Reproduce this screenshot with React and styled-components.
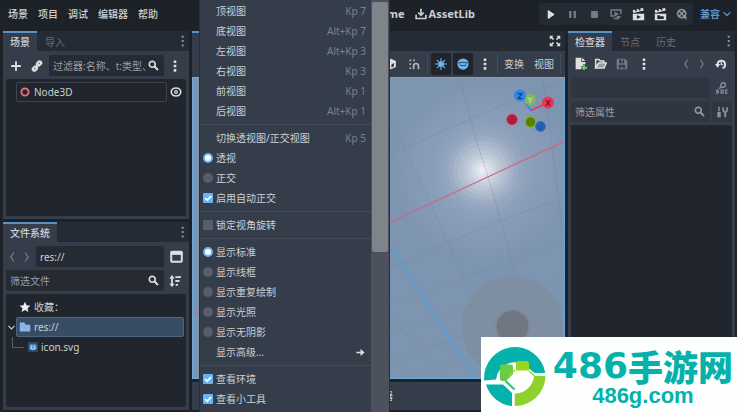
import React from "react";
import styled, { createGlobalStyle } from "styled-components";

const base = "#1d2229";
const panel = "#363d4a";
const tabBar = "#252b34";
const well = "#21262e";
const field = "#252a33";
const dimField = "#2f3541";
const textColor = "#cdcfd2";
const dimText = "#7b808a";
const accent = "#5a93c4";
const teal = "#05b1ab";

const GlobalStyle = createGlobalStyle`
    * {
        box-sizing: border-box;
    }
    body {
        margin: 0;
        background: ${base};
        color: ${textColor};
        font: 10px/14px "Noto Sans", "Noto Sans CJK SC", sans-serif;
        overflow: hidden;
    }
    button, input {
        font: inherit;
        color: inherit;
        border: 0;
        margin: 0;
        padding: 0;
        background: none;
    }
    svg {
        flex: none;
        display: block;
    }
`

/* ---------- page ---------- */

const Shell = styled.div`
    position: relative;
    display: flex;
    flex-direction: column;
    height: 100vh;
    overflow: hidden;
`
const Header = styled.header`
    display: flex;
    align-items: flex-start;
    height: 31px;
    padding: 3px 5px 0 8px;
`
const MenuBar = styled.nav`
    display: flex;
    gap: 10px;
    height: 22px;
    align-items: center;
    margin-right: auto;
    font-weight: 500;
`
const Workspaces = styled.div`
    display: flex;
    gap: 10px;
    height: 22px;
    align-items: center;
    margin-right: 64px;
    font-size: 11px;
    font-weight: 700;
`
const IconLabel = styled.button`
    display: flex;
    align-items: center;
    gap: 2px;
`
const PlayBar = styled.div`
    display: flex;
    height: 22px;
    background: ${tabBar};
    border-radius: 2px;
`
const Renderer = styled.button`
    display: flex;
    align-items: center;
    gap: 2px;
    height: 22px;
    margin-left: 7px;
    color: ${accent};
    font-weight: 700;
`
const Body = styled.div`
    flex: 1;
    min-height: 0;
    display: grid;
    grid-template-columns: 186px minmax(0, 1fr) 167px;
    gap: 3px;
    padding: 0 2px 2px 3px;
`
const Column = styled.div`
    display: flex;
    flex-direction: column;
    gap: ${p => p.$gap || 0}px;
    min-height: 0;
    min-width: 0;
`

/* ---------- docks ---------- */

const Dock = styled.section`
    flex: 1;
    min-height: 0;
    display: flex;
    flex-direction: column;
`
const Tabs = styled.div`
    display: flex;
    align-items: center;
    height: 20px;
    background: ${tabBar};
`
const Tab = styled.button`
    align-self: stretch;
    padding: 0 ${p => p.$pad || 8}px;
    border-top: 2px solid ${p => (p.$active ? accent : "transparent")};
    background: ${p => (p.$active ? panel : "transparent")};
    color: ${p => (p.$active ? textColor : "#666c77")};
    font-weight: ${p => (p.$active ? 500 : 400)};
`
const Spacer = styled.div`
    flex: 1;
`
const DockBody = styled.div`
    flex: 1;
    min-height: 0;
    display: flex;
    flex-direction: column;
    gap: 3px;
    padding: ${p => p.$top || 4}px 3px 3px;
    background: ${panel};
`
const Row = styled.div`
    display: flex;
    align-items: center;
    gap: ${p => p.$gap || 0}px;
    height: 21px;
`
const Tool = styled.button`
    display: flex;
    align-items: center;
    justify-content: center;
    width: ${p => p.$w || 22}px;
    height: ${p => p.$h || 22}px;
    border-radius: 2px;
    color: ${p => (p.$dim ? "#767b85" : "#e0e0e0")};
    background: ${p => p.$bg || "none"};
`
const Field = styled.label`
    flex: 1;
    min-width: 0;
    display: flex;
    align-items: center;
    height: 21px;
    padding: 0 5px 0 4px;
    border-radius: 2px;
    background: ${p => (p.$dim ? dimField : field)};
    color: ${p => (p.$dim ? "#90949c" : "#d8d9db")};
`
const Input = styled.input`
    flex: 1;
    min-width: 0;
    width: 0;
    outline: none;
    color: ${textColor};
    &::placeholder {
        color: #9a9ea6;
        opacity: 1;
    }
`
const Tree = styled.div`
    flex: 1;
    min-height: 0;
    padding: 3px 2px 3px 0;
    border-radius: 2px;
    background: ${well};
`
const TreeRow = styled.div`
    display: flex;
    align-items: center;
    height: 20px;
    padding-left: ${p => p.$indent || 0}px;
`
const TreeCell = styled.div`
    flex: 1;
    display: flex;
    align-items: center;
    gap: 3px;
    height: 20px;
    padding-left: 2px;
    border: 1px solid ${p => (p.$outlined ? "#3d434f" : p.$selected ? "#4b6480" : "transparent")};
    border-radius: 2px;
    background: ${p => (p.$selected ? "#384d63" : "none")};
`

/* ---------- 3D viewport ---------- */

const ViewTools = styled.div`
    display: flex;
    align-items: center;
    justify-content: flex-end;
    gap: 2px;
    height: 26px;
    padding-right: 4px;
    background: ${panel};
`
const Divider = styled.span`
    width: 1px;
    height: 20px;
    background: #464c59;
    margin: 0 ${p => p.$m || 0}px;
`
const ViewButton = styled.button`
    padding: 0 4px;
`
const Viewport = styled.div`
    flex: 1;
    min-height: 0;
    border: 1px solid #6ba9e0;
    background: #7e95b2;
`
const Scene = styled.svg`
    width: 100%;
    height: 100%;
`
const BottomPanel = styled.div`
    display: flex;
    align-items: center;
    gap: 11px;
    height: 28px;
    margin-top: 3px;
    padding-left: 7px;
    background: ${panel};
    white-space: nowrap;
`

/* ---------- popup menu ---------- */

const Popup = styled.div`
    position: absolute;
    top: 0;
    bottom: 0;
    left: 199px;
    width: 191px;
    display: flex;
    overflow: hidden;
    background: ${panel};
    border: solid #2a303a;
    border-width: 0 1px;
`
const PopupList = styled.div`
    flex: 1;
    padding-top: 1px;
`
const item = `
    display: flex;
    align-items: center;
    width: 100%;
    height: 20px;
    padding: 0 5px 0 3px;
    text-align: left;
`
const ItemButton = styled.button`
    ${item}
`
const ItemLabel = styled.label`
    ${item}
`
const Mark = styled.span`
    width: 13px;
    flex: none;
`
const Shortcut = styled.span`
    margin-left: auto;
    color: ${dimText};
`
const Separator = styled.hr`
    height: 1px;
    margin: 3px 0;
    border: 0;
    background: #454b58;
`
const Toggle = styled.input`
    appearance: none;
    flex: none;
    width: 10px;
    height: 10px;
    margin-right: 3px;
    border-radius: ${p => (p.type === "radio" ? "50%" : "1px")};
    background: #575d69;
    &[type="radio"]:checked {
        background: #fff;
        border: 2px solid #69b6f7;
    }
    &[type="checkbox"]:checked {
        background: #63b4f8 url("data:image/svg+xml,%3Csvg xmlns='http://www.w3.org/2000/svg' viewBox='0 0 10 10'%3E%3Cpath d='M2 5l2.2 2.2L8.2 3' fill='none' stroke='white' stroke-width='1.7'/%3E%3C/svg%3E");
    }
`
const ScrollTrack = styled.div`
    width: 18px;
    padding: 2px 1px 0;
    background: #4c515d;
`
const ScrollThumb = styled.div`
    height: 61%;
    border-radius: 2px;
    background: #7f848b;
`

/* ---------- site badge ---------- */

const Badge = styled.aside`
    position: absolute;
    right: 0;
    bottom: 0;
    display: flex;
    align-items: center;
    gap: 6px;
    height: 75px;
    padding: 0 2px;
    background: #fdfefe;
    color: ${teal};
`
const BadgeText = styled.div`
    display: flex;
    flex-direction: column;
    align-items: center;
    padding: 7px 2px 0 0;
    white-space: nowrap;
`
const BadgeTitle = styled.strong`
    display: flex;
    align-items: center;
    height: 36px;
    font: 900 35px/36px "Noto Sans CJK SC", sans-serif;
`
const BadgeDigits = styled.span`
    font: 700 36px/36px "DejaVu Sans", sans-serif;
`
const BadgeUrl = styled.span`
    font: 700 22px/24px "Liberation Sans", sans-serif;
`

/* ---------- icons ---------- */

const Icon = ({ size = 11, children, ...rest }) => (
    <svg width={size} height={size} viewBox="0 0 16 16" fill="currentColor" {...rest}>{children}</svg>
)
const line = { fill: "none", stroke: "currentColor", strokeWidth: 2 }

const Dots = () => <Icon size={12}><path d="M6.3 0.500h3.400v3.400H6.300zM6.300 6.300h3.400v3.400H6.300zM6.300 12.100h3.400v3.400H6.300z" /></Icon>
const ThinDots = () => <Icon size={12} color="#91959c"><path d="M6.300 1h2.600v2.600H6.300zM6.300 6.800h2.600v2.600H6.300zM6.300 12.600h2.600v2.600H6.300z" /></Icon>
const Plus = () => <Icon size={12}><path d="M6.800 1.500h2.400v5.300h5.300v2.400H9.200v5.300H6.800V9.200H1.500V6.800h5.300z" /></Icon>
const Link = () => (
    <Icon size={12}>
        <g {...line} strokeWidth="3">
            <rect x="7.8" y="2.6" width="6" height="4" rx="2" transform="rotate(-45 10.8 4.6)" />
            <rect x="2.2" y="9.4" width="6" height="4" rx="2" transform="rotate(-45 5.2 11.4)" />
            <path d="M6 10l4-4" strokeWidth="2" />
        </g>
    </Icon>
)
const Search = () => <Icon size={11}><circle cx="6.200" cy="6.200" r="4.300" {...line} strokeWidth="2.400" /><path d="M9.500 9.500l5 5" {...line} strokeWidth="3" /></Icon>
const Eye = () => <Icon size={12}><ellipse cx="8" cy="8" rx="6.300" ry="5.300" {...line} strokeWidth="2.200" /><circle cx="8" cy="8" r="2.600" /><circle cx="8" cy="8" r="1" fill={well} /></Icon>
const Left = () => <Icon size={12}><path d="M10.500 2L6.500 8l4 6" {...line} strokeWidth="1.700" /></Icon>
const Right = () => <Icon size={12}><path d="M5.500 2L9.500 8l-4 6" {...line} strokeWidth="1.700" /></Icon>
const Down = ({ size = 10 }) => <Icon size={size}><path d="M2.500 5L8 10.500 13.500 5" {...line} /></Icon>
const Split = () => <Icon size={13}><rect x="1.500" y="2" width="13" height="12.500" rx="1" {...line} strokeWidth="2.400" /><path d="M1 1.500h14V6H1z" /></Icon>
const Sort = () => <Icon size={12}><path d="M4 0L7.500 4.500H5.200v7h2.300L4 16 .5 11.500h2.300v-7H.5zM8.500 1.500H16V4H8.500zM8.500 6.700h5.500v2.500H8.500zM9 12h3v2.400H9z" /></Icon>
const Star = () => <Icon size={12} color="#eceef0"><path d="M8 1l2.100 4.700 5.100.6-3.800 3.400 1.100 5L8 12.100 3.500 14.700l1.100-5L.8 6.300l5.100-.6z" /></Icon>
const Folder = () => <Icon size={12} color="#87b8e8"><path d="M1 3a1 1 0 0 1 1-1h5l2 3h5a1 1 0 0 1 1 1v7a1 1 0 0 1-1 1H2a1 1 0 0 1-1-1z" /></Icon>
const Godot = () => (
    <Icon size={10}>
        <rect width="16" height="16" rx="2" fill="#2f4a64" />
        <path d="M2.500 5l2.500-2 2 1h2l2-1 2.500 2v6q-5.500 4-11 0z" fill="#5b9fd6" />
        <path d="M3 10.500h3v1.500h4v-1.500h3" fill="none" stroke="#cfe4f5" strokeWidth=".8" />
        <circle cx="5.500" cy="8" r="1.100" fill="#dcecf8" /><circle cx="10.500" cy="8" r="1.100" fill="#dcecf8" />
    </Icon>
)
const Download = () => <Icon size={12}><path d="M8 1v8M4.300 6L8 9.700 11.700 6M1.500 9v5h13V9" {...line} strokeWidth="2.200" /></Icon>
const Play = () => <Icon size={11}><path d="M4 2.500v11a.8.8 0 0 0 1.200.6l8-5.500a.8.8 0 0 0 0-1.200l-8-5.500A.8.8 0 0 0 4 2.500z" /></Icon>
const Pause = () => <Icon size={11}><path d="M3 3h3.500v10H3zM9.500 3H13v10H9.500z" /></Icon>
const Stop = () => <Icon size={11}><rect x="3" y="3" width="10" height="10" rx="1" /></Icon>
const Remote = () => <Icon size={12}><path d="M14.500 8V2.500h-13v8H6" {...line} /><path d="M6 4.500L12 8l-6 3.500zM9 10.500h5v2.500h-2v2H5v-2h4z" /></Icon>
const Clapper = ({ glyph }) => (
    <Icon size={13}>
        <path d="M1 2.500l2.500-.5.8 2 2-.4-.8-2L8 1.100l.8 2 2-.4-.8-2 3.500-.7 1 3L1.500 6zM1 7h14v8H1z" />
        <path d={glyph} fill={tabBar} />
    </Icon>
)
const Movie = () => (
    <Icon size={12} color="#8e9299">
        <path d="M7.500 1a6.500 6.500 0 1 0 3 12.300L14 15.500V12l-.8-1.200A6.500 6.500 0 0 0 7.500 1z" />
        <g fill={tabBar}>
            <circle cx="7.500" cy="4.300" r="1.500" />
            <circle cx="4.400" cy="7.500" r="1.500" />
            <circle cx="10.600" cy="7.500" r="1.500" />
            <circle cx="7.500" cy="10.700" r="1.500" />
        </g>
    </Icon>
)
const Expand = () => <Icon size={12}><path d="M1 1h5L4.300 2.700 6.800 5.200 5.200 6.800 2.700 4.300 1 6zM15 1v5l-1.700-1.700-2.500 2.500-1.600-1.600 2.500-2.500L10 1zM1 15v-5l1.700 1.700 2.500-2.500 1.600 1.600-2.500 2.500L6 15zM15 15h-5l1.700-1.700-2.500-2.500 1.600-1.600 2.500 2.500L15 10z" /></Icon>
const Cube = () => <Icon size={12}><path d="M8 1l6.500 3v8L8 15l-6.500-3V4z" /><path d="M8.500 8.500l3.500-2v4.500l-3.500 2z" fill={panel} /></Icon>
const Magnet = () => <Icon size={12} color="#b4b7bd"><path d="M7.500 15v-4.500a3.200 3.200 0 0 1 6.400 0V15" {...line} strokeWidth="2.200" /><path d="M2 2h2.200v2.200H2zM7 2h2.200v2.200H7zM2 7h2.200v2.200H2zM2 12.500h2.200v2.200H2z" /></Icon>
const Sun = () => <Icon size={12} color="#6fb5ee"><circle cx="8" cy="8" r="3.800" /><path d="M8 0v16M0 8h16M2.500 2.500l11 11M13.500 2.500l-11 11" stroke="currentColor" strokeWidth="1.400" /></Icon>
const Globe = () => <Icon size={12} color="#6fb5ee"><circle cx="8" cy="8" r="7.500" /><path d="M2 6.800q6-2.300 12 0M3.500 9.300q4.500 2 9 0" fill="none" stroke="#2b4c68" strokeWidth="1.500" /></Icon>
const FileAdd = () => <Icon size={13}><path d="M2 1h7v5h5v3h-3v2H9v4H2zM10 1l4 4h-4z" /><path d="M11 9.500h2.500V12H16v2.500h-2.500V16H11v-1.500H9V12h2z" fill="#5fd05c" /></Icon>
const FolderOpen = () => <Icon size={13}><path d="M2 13V3h4l1.500 2H12v2M2 13.500L5.500 7.500H15l-2.500 6z" {...line} strokeWidth="1.800" /><path d="M5.500 8H14l-2 5H3z" opacity=".6" /></Icon>
const Save = () => <Icon size={12}><path fillRule="evenodd" d="M1 2a1 1 0 0 1 1-1h10l3 3v10a1 1 0 0 1-1 1H2a1 1 0 0 1-1-1zM4 2v5h7V2H9v3H7V2zM3.500 9v5H7v-2h2v2h3.500V9z" /></Icon>
const History = () => <Icon size={12}><path d="M3.500 9a5 5 0 1 1 6.500 4.500" {...line} strokeWidth="2.600" /><path d="M0 8h7l-3.500 5z" /><path d="M8.300 5v4H11" {...line} strokeWidth="1.600" /></Icon>
const Doc = () => (
    <Icon size={12} color="#8b9098">
        <circle cx="9.500" cy="4" r="3" {...line} strokeWidth="1.800" />
        <path d="M7.500 6L4 9" {...line} />
        <path d="M1 10.700v4.200h1.200q2.400-2.100 0-4.200zM6.800 10.800h2.600v4H6.800zM15.500 10.800h-2.700v4h2.700" {...line} strokeWidth="1.500" />
    </Icon>
)
const Tools = () => <Icon size={12} color="#8b9098"><path d="M3 1h2v6H3zM1.700 8h4.600v7H1.700zM11 8h2.600v7H11z" /><path d="M9.500 1.500v3.500a2.700 2.700 0 0 0 5.400 0V1.500" {...line} strokeWidth="2.200" /></Icon>
const Arrow = () => <Icon size={11} color="#e0e0e0"><path d="M2 6.800h6V3l6 5-6 5V9.200H2z" /></Icon>

const BadgeLogo = () => (
    <svg width="64" height="64" viewBox="0 0 64 64">
        <path d="M1.200 37.500A30.800 30.800 0 0 1 62.300 30H51.500L46 25.500A19 19 0 0 0 13 36.500z" fill={teal} />
        <path d="M3 41.500h17l9 8.500v13A30.500 30.500 0 0 1 3 41.500z" fill={teal} />
        <path d="M62.500 33A30.500 30.500 0 0 1 31.800 63V50.500A19 19 0 0 0 51 33z" fill="#8ed12c" />
        <path d="M19 21.500h9a2 2 0 0 1 2 2V31l-7 7h-4a2 2 0 0 1-2-2V23.500a2 2 0 0 1 2-2z" fill="#6acb45" />
        <path d="M35 18h8a3 3 0 0 1 3 3v6.500H33V20a2 2 0 0 1 2-2z" fill="#9ad61e" />
        <path d="M32 27l-6 5M46 28l5.500 5" fill="none" stroke="#9ad61e" strokeWidth="1.500" />
        <path d="M22.500 38l9 8.500" fill="none" stroke="#3fc07a" strokeWidth="2.200" />
    </svg>
)

const gridLines = [
    "M460 78L473 130 495 200 512 263 523 313 532 379",
    "M376 90L400 140 430 203 463 278 487 333 505 379",
    "M543 78L550 130 563 237",
    "M380 160L447 130 500 107 564 80",
    "M391 268L440 247 490 225 564 198",
    "M391 304L564 243",
    "M391 333L564 277",
    "M391 358L463 338 564 306",
    "M400 377L480 353 564 327",
    "M391 317L448 379",
    "M391 357L412 379",
]
// the light falls off in visible bands
const halos = [[50, 0.02], [42, 0.03], [35, 0.05], [30, 0.09], [25, 0.1], [20, 0.12], [16, 0.15], [12, 0.18], [8, 0.25], [4, 0.4]]

const axes = [
    { name: "Y", x: 530, y: 100, color: "#83b464", ink: "#b4dc86" },
    { name: "Z", x: 520, y: 96, color: "#2c86ea", ink: "#123c6e" },
    { name: "X", x: 548, y: 103, color: "#ee3557", ink: "#7c1529" },
]

function SceneView() {
    return (
        <Scene viewBox="193 78 371 301" preserveAspectRatio="xMaxYMid slice">
            <defs>
                <radialGradient id="haze" gradientUnits="userSpaceOnUse" cx="483" cy="171" r="90">
                    <stop offset="0" stopColor="#fff" stopOpacity=".28" />
                    <stop offset=".5" stopColor="#fff" stopOpacity=".1" />
                    <stop offset="1" stopColor="#fff" stopOpacity="0" />
                </radialGradient>
            </defs>
            <circle cx="483" cy="171" r="90" fill="url(#haze)" />
            {halos.map(([r, o]) => <circle key={r} cx="483" cy="171" r={r} fill="#fff" opacity={o} />)}
            <g fill="none" stroke="#747f90" strokeOpacity=".32">
                {gridLines.map(d => <path key={d} d={d} />)}
            </g>
            <path d="M193 315L391 222.500 564 142" fill="none" stroke="#cf6680" strokeWidth="1.300" />
            <path d="M391 247L475 379" stroke="#4ba3e0" strokeWidth="1.300" />
            <circle cx="512.500" cy="327" r="51" fill="#7f868e" opacity=".38" />
            <circle cx="512.500" cy="327" r="18" fill="#81878f" opacity=".5" />
            <circle cx="512.500" cy="327" r="16" fill="#717782" />
            <path d="M531 111L520 96" stroke="#2c86ea" strokeWidth="1.500" />
            <path d="M531 111L548 103" stroke="#ee3557" strokeWidth="1.500" />
            <circle cx="540.500" cy="127" r="5" fill="#2160ad" stroke="#2d78cf" />
            <circle cx="530.500" cy="122.500" r="5.200" fill="#568000" stroke="#83bd06" />
            <circle cx="512" cy="120" r="5.200" fill="#a62139" stroke="#dc3453" />
            {axes.map(a => (
                <g key={a.name}>
                    <circle cx={a.x} cy={a.y} r="6" fill={a.color} />
                    <text x={a.x} y={a.y + 3} fill={a.ink} fontSize="9" fontWeight="700" textAnchor="middle">{a.name}</text>
                </g>
            ))}
        </Scene>
    )
}

const menu = [
    { text: "顶视图", key: "Kp 7" },
    { text: "底视图", key: "Alt+Kp 7" },
    { text: "左视图", key: "Alt+Kp 3" },
    { text: "右视图", key: "Kp 3" },
    { text: "前视图", key: "Kp 1" },
    { text: "后视图", key: "Alt+Kp 1" },
    null,
    { text: "切换透视图/正交视图", key: "Kp 5" },
    { text: "透视", type: "radio", group: "projection", on: true },
    { text: "正交", type: "radio", group: "projection" },
    { text: "启用自动正交", type: "checkbox", on: true },
    null,
    { text: "锁定视角旋转", type: "checkbox" },
    null,
    { text: "显示标准", type: "radio", group: "display", on: true },
    { text: "显示线框", type: "radio", group: "display" },
    { text: "显示重复绘制", type: "radio", group: "display" },
    { text: "显示光照", type: "radio", group: "display" },
    { text: "显示无阴影", type: "radio", group: "display" },
    { text: "显示高级...", sub: true },
    null,
    { text: "查看环境", type: "checkbox", on: true },
    { text: "查看小工具", type: "checkbox", on: true },
]

function MenuItem({ entry }) {
    if (!entry) return <Separator />
    if (entry.type) {
        return (
            <ItemLabel>
                <Toggle type={entry.type} name={entry.group} defaultChecked={entry.on} />
                {entry.text}
            </ItemLabel>
        )
    }
    return (
        <ItemButton>
            <Mark />
            {entry.text}
            <Shortcut>{entry.key}</Shortcut>
            {entry.sub && <Arrow />}
        </ItemButton>
    )
}

function ViewMenu() {
    return (
        <Popup>
            <PopupList>
                {menu.map((entry, i) => <MenuItem key={i} entry={entry} />)}
            </PopupList>
            <ScrollTrack><ScrollThumb /></ScrollTrack>
        </Popup>
    )
}

function SceneDock() {
    return (
        <Dock>
            <Tabs>
                <Tab $active $pad={7}>场景</Tab>
                <Tab>导入</Tab>
                <Spacer />
                <ThinDots />
            </Tabs>
            <DockBody>
                <Row>
                    <Tool $w={19}><Plus /></Tool>
                    <Tool $w={24}><Link /></Tool>
                    <Field>
                        <Input placeholder="过滤器:名称、t:类型、" aria-label="过滤器" />
                        <Search />
                    </Field>
                    <Tool><Dots /></Tool>
                </Row>
                <Tree>
                    <TreeRow $indent={10}>
                        <TreeCell $outlined>
                            <Icon size={12} color="#e0707f"><circle cx="8" cy="8" r="4.800" {...line} strokeWidth="2.600" /></Icon>
                            Node3D
                        </TreeCell>
                        <Tool $w={17}><Eye /></Tool>
                    </TreeRow>
                </Tree>
            </DockBody>
        </Dock>
    )
}

function FileSystemDock() {
    return (
        <Dock>
            <Tabs>
                <Tab $active $pad={7}>文件系统</Tab>
                <Spacer />
                <ThinDots />
            </Tabs>
            <DockBody>
                <Row $gap={3}>
                    <Tool $w={12} $dim><Left /></Tool>
                    <Tool $w={12} $dim><Right /></Tool>
                    <Field><Input defaultValue="res://" aria-label="路径" /></Field>
                    <Tool $w={19}><Split /></Tool>
                </Row>
                <Row>
                    <Field>
                        <Input placeholder="筛选文件" aria-label="筛选文件" />
                        <Search />
                    </Field>
                    <Tool><Sort /></Tool>
                </Row>
                <Tree>
                    <TreeRow $indent={10}>
                        <TreeCell><Star />收藏：</TreeCell>
                    </TreeRow>
                    <TreeRow $indent={1}>
                        <Down size={9} />
                        <TreeCell $selected><Folder />res://</TreeCell>
                    </TreeRow>
                    <TreeRow $indent={5}>
                        <svg width="14" height="20" viewBox="0 0 14 20"><path d="M1.500 0v10.500H13" fill="none" stroke="#5a606b" /></svg>
                        <TreeCell><Godot />icon.svg</TreeCell>
                    </TreeRow>
                </Tree>
            </DockBody>
        </Dock>
    )
}

function InspectorDock() {
    return (
        <Dock>
            <Tabs>
                <Tab $active $pad={7}>检查器</Tab>
                <Tab>节点</Tab>
                <Tab>历史</Tab>
                <Spacer />
                <ThinDots />
            </Tabs>
            <DockBody $top={2}>
                <Row>
                    <Tool $w={18}><FileAdd /></Tool>
                    <Tool><FolderOpen /></Tool>
                    <Tool $dim><Save /></Tool>
                    <Tool><Dots /></Tool>
                    <Spacer />
                    <Tool $w={16} $dim><Left /></Tool>
                    <Tool $w={16} $dim><Right /></Tool>
                    <Tool><History /></Tool>
                </Row>
                <Row $gap={2}>
                    <Field $dim><Input aria-label="对象" /></Field>
                    <Tool $w={20} $h={21} $dim><Doc /></Tool>
                </Row>
                <Row $gap={2}>
                    <Field $dim>
                        <Input placeholder="筛选属性" aria-label="筛选属性" />
                        <Search />
                    </Field>
                    <Tool $w={20} $h={21} $dim $bg={dimField}><Tools /></Tool>
                </Row>
                <Tree />
            </DockBody>
        </Dock>
    )
}

function App() {
    return (
        <>
            <GlobalStyle />
            <Shell>
                <Header>
                    <MenuBar>
                        {["场景", "项目", "调试", "编辑器", "帮助"].map(t => <button key={t}>{t}</button>)}
                    </MenuBar>
                    <Workspaces>
                        <button>Game</button>
                        <IconLabel><Download />AssetLib</IconLabel>
                    </Workspaces>
                    <PlayBar>
                        <Tool><Play /></Tool>
                        <Tool $dim><Pause /></Tool>
                        <Tool $dim><Stop /></Tool>
                        <Tool $dim><Remote /></Tool>
                        <Tool><Clapper glyph="M6 8.500l5 2.500-5 2.500z" /></Tool>
                        <Tool><Clapper glyph="M4 9h3l1 1h4v3.500H4z" /></Tool>
                        <Tool $dim><Movie /></Tool>
                    </PlayBar>
                    <Renderer>兼容<Down /></Renderer>
                </Header>
                <Body>
                    <Column $gap={3}>
                        <SceneDock />
                        <FileSystemDock />
                    </Column>
                    <Column>
                        <Tabs>
                            <Tab $active>[空]</Tab>
                            <Spacer />
                            <Tool $w={20} $h={20}><Expand /></Tool>
                        </Tabs>
                        <ViewTools>
                            <Tool><Cube /></Tool>
                            <Tool $w={20}><Magnet /></Tool>
                            <Divider $m={1} />
                            <Tool $w={20} $bg="#1f242d"><Sun /></Tool>
                            <Tool $w={20} $bg="#1f242d"><Globe /></Tool>
                            <Tool $w={20}><Dots /></Tool>
                            <Divider />
                            <ViewButton>变换</ViewButton>
                            <ViewButton>视图</ViewButton>
                            <Divider />
                        </ViewTools>
                        <Viewport><SceneView /></Viewport>
                        <BottomPanel>
                            {["输出", "调试器", "音频", "动画", "着色器编辑器"].map(t => <button key={t}>{t}</button>)}
                        </BottomPanel>
                    </Column>
                    <InspectorDock />
                </Body>
                <ViewMenu />
                <Badge>
                    <BadgeLogo />
                    <BadgeText>
                        <BadgeTitle><BadgeDigits>486</BadgeDigits>手游网</BadgeTitle>
                        <BadgeUrl>486g.com</BadgeUrl>
                    </BadgeText>
                </Badge>
            </Shell>
        </>
    )
}
export default App;
